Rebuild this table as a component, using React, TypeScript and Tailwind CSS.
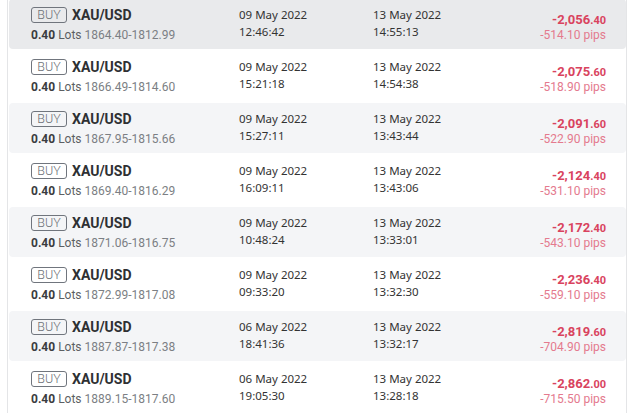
import React from "react";

type Row = {
  lots: string;
  range: string;
  openDate: string;
  openTime: string;
  closeDate: string;
  closeTime: string;
  amountMain: string;
  amountDec: string;
  pips: string;
};

const rows: Row[] = [
  { lots: "0.40", range: "1864.40-1812.99", openDate: "09 May 2022", openTime: "12:46:42", closeDate: "13 May 2022", closeTime: "14:55:13", amountMain: "-2,056", amountDec: ".40", pips: "-514.10 pips" },
  { lots: "0.40", range: "1866.49-1814.60", openDate: "09 May 2022", openTime: "15:21:18", closeDate: "13 May 2022", closeTime: "14:54:38", amountMain: "-2,075", amountDec: ".60", pips: "-518.90 pips" },
  { lots: "0.40", range: "1867.95-1815.66", openDate: "09 May 2022", openTime: "15:27:11", closeDate: "13 May 2022", closeTime: "13:43:44", amountMain: "-2,091", amountDec: ".60", pips: "-522.90 pips" },
  { lots: "0.40", range: "1869.40-1816.29", openDate: "09 May 2022", openTime: "16:09:11", closeDate: "13 May 2022", closeTime: "13:43:06", amountMain: "-2,124", amountDec: ".40", pips: "-531.10 pips" },
  { lots: "0.40", range: "1871.06-1816.75", openDate: "09 May 2022", openTime: "10:48:24", closeDate: "13 May 2022", closeTime: "13:33:01", amountMain: "-2,172", amountDec: ".40", pips: "-543.10 pips" },
  { lots: "0.40", range: "1872.99-1817.08", openDate: "09 May 2022", openTime: "09:33:20", closeDate: "13 May 2022", closeTime: "13:32:30", amountMain: "-2,236", amountDec: ".40", pips: "-559.10 pips" },
  { lots: "0.40", range: "1887.87-1817.38", openDate: "06 May 2022", openTime: "18:41:36", closeDate: "13 May 2022", closeTime: "13:32:17", amountMain: "-2,819", amountDec: ".60", pips: "-704.90 pips" },
  { lots: "0.40", range: "1889.15-1817.60", openDate: "06 May 2022", openTime: "19:05:30", closeDate: "13 May 2022", closeTime: "13:28:18", amountMain: "-2,862", amountDec: ".00", pips: "-715.50 pips" },
];

const din = { fontFamily: "Roboto, 'Liberation Sans', sans-serif" };
const segoe = { fontFamily: "'Noto Sans', 'Open Sans', sans-serif" };

function TradeRow({ r, i }: { r: Row; i: number }) {
  const bg = i === 0 ? "bg-[#e9eaec]" : i % 2 === 0 ? "bg-[#f4f5f7]" : "bg-white";
  return (
    <div className={`flex h-[50px] mb-[2px] pl-[22px] pr-[20px] rounded-sm ${bg}`}>
      <div className="w-[208px] pt-2 flex flex-col" style={din}>
        <div className="flex items-center h-4">
          <span className="h-4 w-9 flex items-center justify-center border border-[#70757d] rounded-[3px] text-[12.5px] text-[#6b6f75] leading-none font-light">
            BUY
          </span>
          <span className="ml-[5px] text-[14px] font-bold text-[#2e3033] leading-none">XAU/USD</span>
        </div>
        <div className="mt-[4px] text-[12px] leading-[16px] text-[#555]">
          <span className="font-bold text-[#3a3c40]">{r.lots}</span>{" "}
          <span className="text-[#5c5f63]">Lots</span>{" "}
          <span className="text-[#7c7f84]">{r.range}</span>
        </div>
      </div>
      <div className="w-[134px] pt-2 text-[11.5px] text-[#333] flex flex-col" style={segoe}>
        <div className="leading-4">{r.openDate}</div>
        <div className="leading-[18px]">{r.openTime}</div>
      </div>
      <div className="w-[134px] pt-2 text-[11.5px] text-[#333] flex flex-col" style={segoe}>
        <div className="leading-4">{r.closeDate}</div>
        <div className="leading-[18px]">{r.closeTime}</div>
      </div>
      <div className="flex-1 pt-[11px] flex flex-col items-end" style={din}>
        <div className="leading-[17px] text-[#d9435e] font-bold">
          <span className="text-[13px]">{r.amountMain}</span>
          <span className="text-[11px]">{r.amountDec}</span>
        </div>
        <div className="leading-[13px] text-[12px] text-[#e47a8e]">{r.pips}</div>
      </div>
    </div>
  );
}

export default function App() {
  return (
    <div className="w-[630px] h-[413px] overflow-hidden bg-white">
      <div className="ml-[7px] w-[620px] h-[420px] border-l border-r border-[#e4e5e7] -mt-px pl-px">
        {rows.map((r, i) => (
          <TradeRow key={i} r={r} i={i} />
        ))}
      </div>
    </div>
  );
}
